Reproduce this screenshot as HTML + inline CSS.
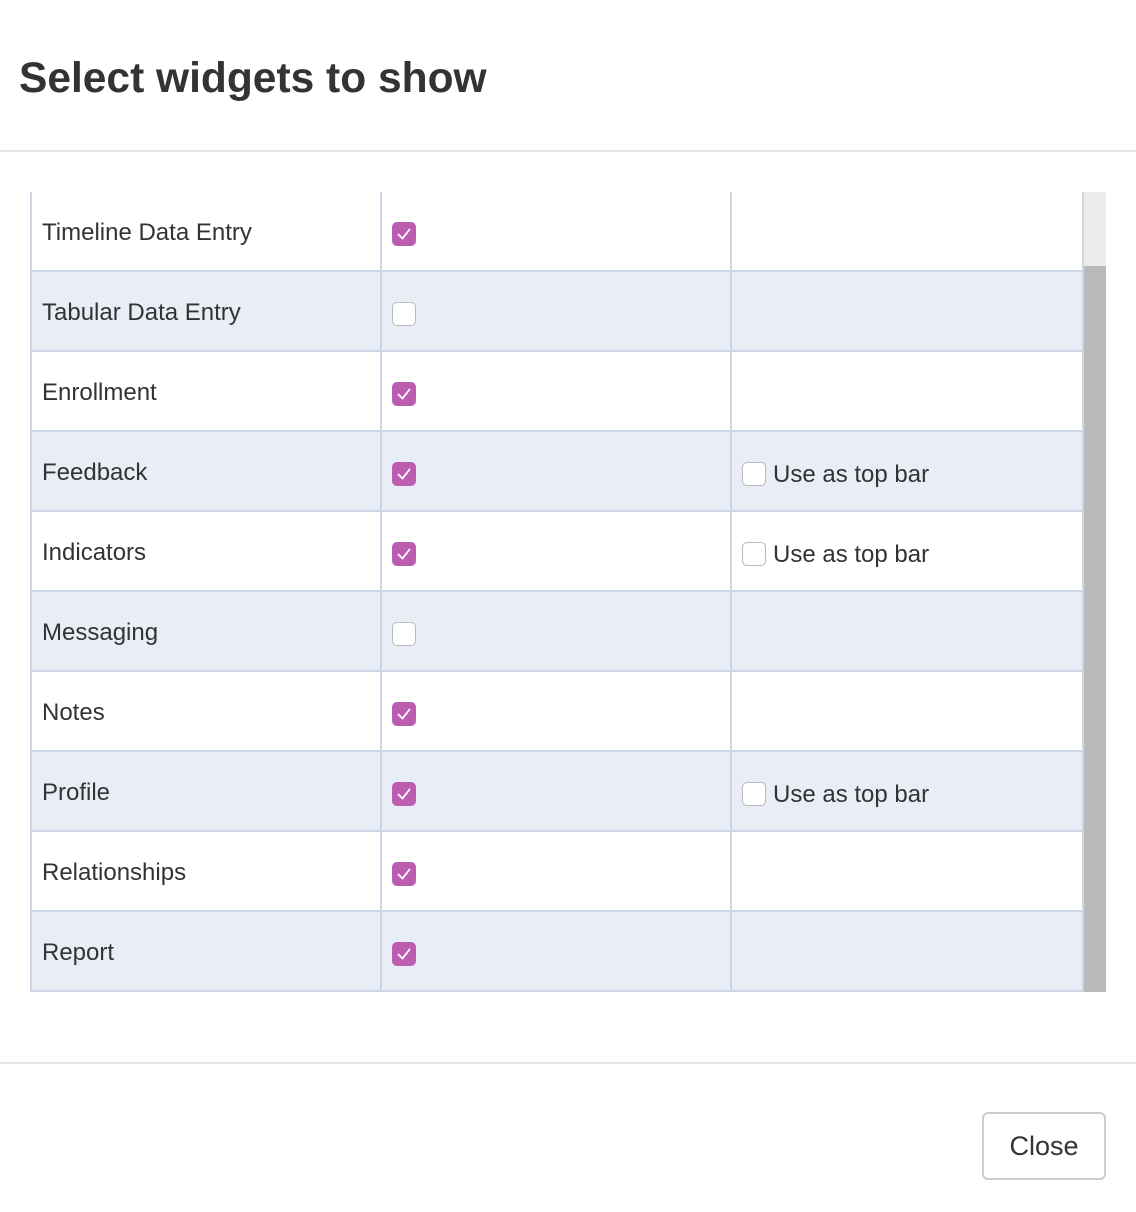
<!DOCTYPE html>
<html><head><meta charset="utf-8">
<style>
*{margin:0;padding:0;box-sizing:border-box}
html,body{width:1136px;height:1212px;background:#fff;overflow:hidden;font-family:"Liberation Sans",Arial,sans-serif;color:#333;position:relative}
h1{position:absolute;left:19px;top:54px;font-size:42.5px;font-weight:bold;line-height:50px;color:#333}
.hr{position:absolute;left:0;width:1136px;height:2px;background:#e5e5e5}
.row{position:absolute;left:30px;width:1054px;height:80px;border-left:2px solid #ccd6e6;border-right:2px solid #ccd6e6;border-bottom:2px solid #ccd6e6}
.row.alt{background:#e9eef6}
.vl{position:absolute;top:0;bottom:-2px;width:2px;background:#ccd6e6}
.lbl{position:absolute;left:10px;top:28px;font-size:24px;line-height:26px;color:#333;white-space:nowrap}
.cb{position:absolute;width:24px;height:24px;border-radius:5px}
.cb.on{background:#bb5db0}
.cb.off{background:#fff;border:1.5px solid #b9b9b9}
.cb svg{position:absolute;left:0;top:0}
.use{position:absolute;left:710px;top:30px;font-size:24px;line-height:26px}
.use .cb{left:0;top:0}
.use span{position:absolute;left:31px;top:0px;white-space:nowrap}
.sb{position:absolute;left:1084px;top:192px;width:22px;height:800px;background:#bababa}
.sbt{position:absolute;left:1084px;top:192px;width:22px;height:74px;background:#ececec}
.btn{position:absolute;left:982px;top:1112px;width:124px;height:68px;border:2px solid #ccc;border-radius:6px;font-size:27px;line-height:64px;text-align:center;color:#333}
</style></head><body>
<h1>Select widgets to show</h1>
<div class="hr" style="top:150px"></div>

<div id="tbl"></div>
<script>
var rows=[["Timeline Data Entry",1,0],["Tabular Data Entry",0,0],["Enrollment",1,0],["Feedback",1,1],["Indicators",1,1],["Messaging",0,0],["Notes",1,0],["Profile",1,1],["Relationships",1,0],["Report",1,0]];
var tick='<svg width="24" height="24" viewBox="0 0 24 24"><path d="M6.5 12.5 L10.5 16.5 L17.5 7.5" fill="none" stroke="#fff" stroke-width="1.8" stroke-linecap="round" stroke-linejoin="round"/></svg>';
var h='';
rows.forEach(function(r,i){
 var top=192+80*i;
 h+='<div class="row'+(i%2?' alt':'')+'" style="top:'+top+'px">';
 h+='<div class="vl" style="left:348px"></div><div class="vl" style="left:698px"></div>';
 h+='<div class="lbl">'+r[0]+'</div>';
 h+='<div class="cb '+(r[1]?'on':'off')+'" style="left:360px;top:30px">'+(r[1]?tick:'')+'</div>';
 if(r[2])h+='<div class="use"><div class="cb off"></div><span>Use as top bar</span></div>';
 h+='</div>';
});
document.getElementById('tbl').innerHTML=h;
</script>
<div class="sb"></div><div class="sbt"></div>

<div class="hr" style="top:1062px"></div>
<div class="btn">Close</div>
</body></html>
